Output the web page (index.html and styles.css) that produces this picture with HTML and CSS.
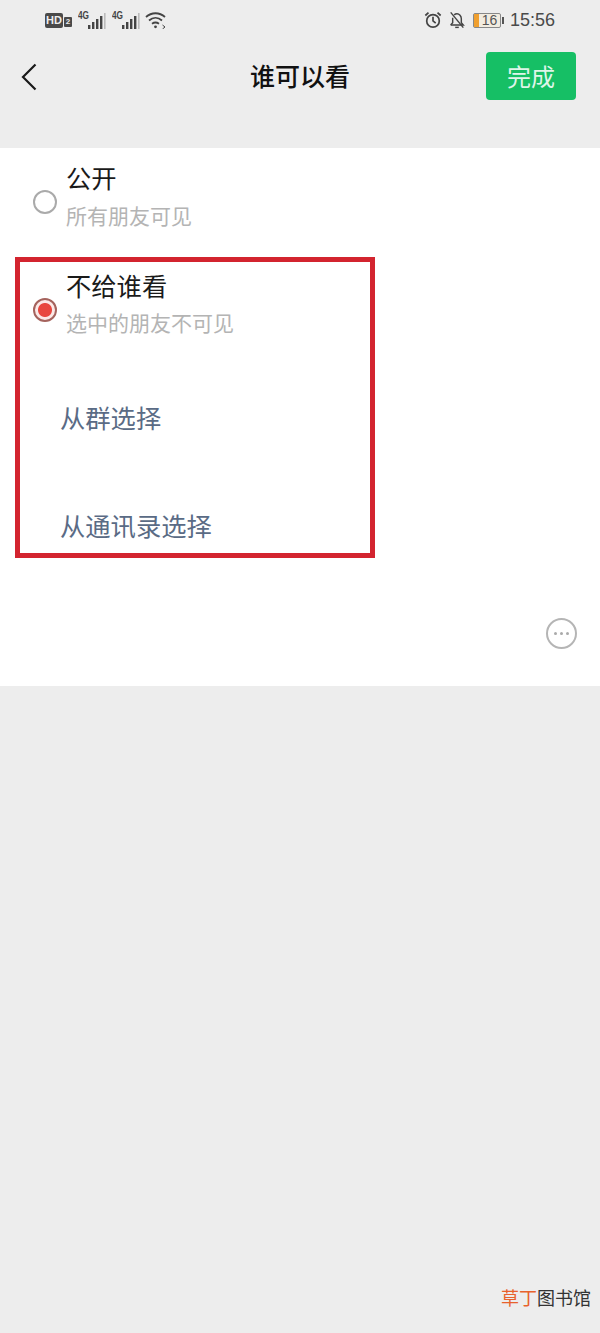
FILE: index.html
```html
<!DOCTYPE html>
<html lang="zh-CN">
    <head>
        <meta charset="UTF-8">
        <title>谁可以看</title>
        <link rel="stylesheet" href="styles.css">
    </head>
    <body>
        <div class="status">
            <div class="status-left">
                <span class="hd">HD</span>
                <span class="sim">2</span>
                <div class="net">
                    <span class="net-label">4G</span>
                    <svg class="bars" viewBox="0 0 18 16">
                        <rect x="0" y="12" width="2.4" height="4" fill="#444"></rect>
                        <rect x="4" y="9" width="2.4" height="7" fill="#444"></rect>
                        <rect x="8" y="6" width="2.4" height="10" fill="#444"></rect>
                        <rect x="12" y="3" width="2.4" height="13" fill="#444"></rect>
                        <rect x="16" y="0" width="1.6" height="16" fill="#bbb"></rect>
                    </svg>
                </div>
                <div class="net">
                    <span class="net-label">4G</span>
                    <svg class="bars" viewBox="0 0 18 16">
                        <rect x="0" y="12" width="2.4" height="4" fill="#444"></rect>
                        <rect x="4" y="9" width="2.4" height="7" fill="#444"></rect>
                        <rect x="8" y="6" width="2.4" height="10" fill="#444"></rect>
                        <rect x="12" y="3" width="2.4" height="13" fill="#444"></rect>
                        <rect x="16" y="0" width="1.6" height="16" fill="#bbb"></rect>
                    </svg>
                </div>
                <svg class="wifi" viewBox="0 0 22 18" fill="none" stroke="#444" stroke-width="1.8">
                    <path d="M1 6 C6.5 1 14.5 1 20 6"></path>
                    <path d="M4 9.5 C8 6 13 6 17 9.5"></path>
                    <path d="M7 12.8 C9.5 11 11.5 11 14 12.8"></path>
                    <circle cx="10.5" cy="15.8" r="1.4" fill="#444" stroke="none"></circle>
                    <path d="M17.5 14 L20 16 L17.5 18" stroke-width="1"></path>
                </svg>
            </div>
            <div class="status-right">
                <svg class="alarm" viewBox="0 0 20 20" fill="none" stroke="#444" stroke-width="1.9">
                    <circle cx="10" cy="11" r="7"></circle>
                    <path d="M10 6.5 V11 L13 13.5"></path>
                    <path d="M1.5 5 L5 1.8 M18.5 5 L15 1.8"></path>
                </svg>
                <svg class="mute" viewBox="0 0 20 20" fill="none" stroke="#444" stroke-width="1.6">
                    <path d="M3 15.5 H17 L14.8 13 V8.5 C14.8 5.5 12.5 3 10 3 C8.8 3 7.7 3.5 6.9 4.3"></path>
                    <path d="M5.2 7.5 V13 L3 15.5"></path>
                    <path d="M8 18.2 H12"></path>
                    <path d="M3 1.5 L17 18.5"></path>
                </svg>
                <div class="battery">
                    <div class="battery-body">
                        <span class="battery-fill"></span>
                        <span class="battery-num">16</span>
                    </div>
                    <span class="battery-cap"></span>
                </div>
                <span class="time">15:56</span>
            </div>
        </div>

        <header class="nav">
            <svg class="back" viewBox="0 0 16 28" fill="none" stroke="#1a1a1a" stroke-width="2.2">
                <path d="M14.5 1.5 L2 14 L14.5 26.5"></path>
            </svg>
            <h1 class="nav-title">谁可以看</h1>
            <button class="done">完成</button>
        </header>

        <main class="card">
            <div class="option">
                <span class="radio"></span>
                <div>
                    <div class="option-title">公开</div>
                    <div class="option-sub">所有朋友可见</div>
                </div>
            </div>

            <section class="marked">
                <div class="option">
                    <span class="radio radio-on"></span>
                    <div>
                        <div class="option-title">不给谁看</div>
                        <div class="option-sub">选中的朋友不可见</div>
                    </div>
                </div>
                <div class="links">
                    <a class="link">从群选择</a>
                    <a class="link">从通讯录选择</a>
                </div>
            </section>

            <div class="more-row">
                <span class="more">
                    <i></i><i></i><i></i>
                </span>
            </div>
        </main>

        <div class="watermark"><span class="wm-orange">草丁</span>图书馆</div>
    </body>
</html>
```

FILE: styles.css
```css
* {
    padding: 0;
    margin: 0;
    box-sizing: border-box
}

body {
    width: 600px;
    height: 1333px;
    position: relative;
    overflow: hidden;
    background: #ededed;
    color: #1a1a1a;
    font-family: "Noto Sans CJK SC", "Liberation Sans", sans-serif
}

.status {
    height: 40px;
    display: flex;
    justify-content: space-between;
    align-items: center;
    padding: 0 45px
}

.status-left,
.status-right {
    display: flex;
    align-items: center
}

.hd {
    width: 18px;
    height: 15px;
    border-radius: 2px;
    background: #4a4a4a;
    color: #eee;
    font: 700 11px/15px "Liberation Sans", sans-serif;
    text-align: center
}

.sim {
    width: 8px;
    height: 10px;
    margin: 4px 0 0 1px;
    border-radius: 1px;
    background: #4a4a4a;
    color: #eee;
    font: 700 8px/10px "Liberation Sans", sans-serif;
    text-align: center
}

.net {
    width: 28px;
    height: 20px;
    margin-left: 6px;
    position: relative
}

.net + .net {
    margin-left: 6px
}

.net-label {
    position: absolute;
    left: 0;
    top: 0;
    font: 700 11px/11px "Liberation Sans", sans-serif;
    color: #444;
    transform: scaleX(.75);
    transform-origin: left
}

.bars {
    position: absolute;
    right: 0;
    bottom: 1px;
    width: 18px;
    height: 16px
}

.wifi {
    width: 22px;
    height: 18px;
    margin-left: 5px
}

.alarm {
    width: 18px;
    height: 18px;
    margin-right: 6px
}

.mute {
    width: 18px;
    height: 18px;
    margin-right: 7px
}

.battery {
    display: flex;
    align-items: center;
    margin-right: 6px
}

.battery-body {
    width: 28px;
    height: 15px;
    border: 1px solid #888;
    border-radius: 2px;
    display: flex;
    align-items: center;
    position: relative;
    background: #f2ece0
}

.battery-fill {
    width: 5px;
    height: 13px;
    background: #f0a030
}

.battery-num {
    flex: 1;
    font: 14px/12px "Liberation Sans", sans-serif;
    color: #555;
    text-align: center
}

.battery-cap {
    width: 2px;
    height: 7px;
    margin-left: 1px;
    background: #555
}

.time {
    font: 18px/20px "Liberation Sans", sans-serif;
    color: #4a4a4a
}

.nav {
    height: 108px;
    display: grid;
    grid-template-columns: 1fr auto 1fr;
    align-items: start;
    padding: 12px 21px 0
}

.back {
    width: 16px;
    height: 28px;
    margin-top: 11px
}

.nav-title {
    font-size: 25px;
    font-weight: 500;
    line-height: 46px;
    color: #111
}

.done {
    justify-self: end;
    width: 90px;
    height: 48px;
    margin-right: 3px;
    border: none;
    border-radius: 4px;
    background: #16bf65;
    color: #dff5e9;
    font: 24px/46px "Noto Sans CJK SC", sans-serif
}

.card {
    height: 538px;
    background: #fff;
    padding-top: 14px
}

.option {
    display: flex;
    align-items: center;
    gap: 9px;
    padding-left: 33px
}

.radio {
    width: 24px;
    height: 24px;
    border: 2px solid #aaa;
    border-radius: 50%;
    margin-top: 14px;
    flex: none
}

.radio-on {
    border-color: #a5635d;
    background: radial-gradient(circle, #e8473f 0 6.5px, #fbe9e7 7.5px)
}

.option-title {
    font-size: 25.3px;
    line-height: 30px
}

.option-sub {
    font-size: 21px;
    line-height: 26px;
    margin-top: 10px;
    color: #b4b4b4
}

.marked {
    width: 360px;
    height: 301px;
    margin: 29px 0 0 15px;
    border: 5px solid #d3242f;
    padding-top: 8px
}

.marked .option {
    padding-left: 13px
}

.marked .option-sub {
    margin-top: 9px
}

.links {
    margin-top: 65px;
    padding-left: 40px;
    display: flex;
    flex-direction: column;
    gap: 74px
}

.link {
    font-size: 25.3px;
    line-height: 34px;
    color: #5a6b85
}

.more-row {
    display: flex;
    justify-content: flex-end;
    padding: 60px 23px 0 0
}

.more {
    width: 31px;
    height: 31px;
    border: 2px solid #b5b5b5;
    border-radius: 50%;
    display: flex;
    justify-content: center;
    align-items: center;
    gap: 3px
}

.more i {
    width: 3px;
    height: 3px;
    border-radius: 50%;
    background: #aaa
}

.watermark {
    position: absolute;
    left: 501px;
    top: 1285px;
    font-size: 18px;
    line-height: 24px;
    color: #333
}

.wm-orange {
    color: #e8622c
}
```
